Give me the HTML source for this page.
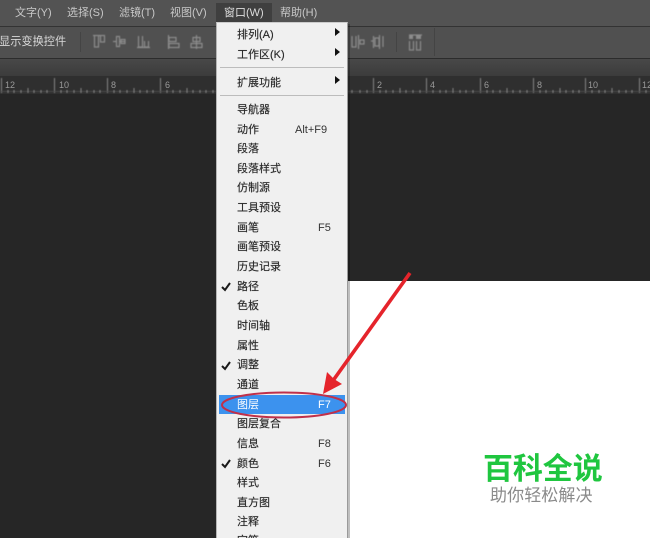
<!DOCTYPE html>
<html lang="zh">
<head>
<meta charset="utf-8">
<style>
html,body{margin:0;padding:0;background:#262626}
#p{position:relative;width:650px;height:538px;overflow:hidden;background:#262626;font-family:"Liberation Sans","Noto Sans CJK SC",sans-serif}
#p div,#p span{position:absolute;white-space:nowrap}
.t{font-size:11px;line-height:14px;color:#c8c8c8;top:6px;filter:blur(.35px)}
.m{left:237px;font-size:11px;line-height:14px;color:#2a2a2a;filter:blur(.3px);text-shadow:0 0 .5px #555}
.k{font-size:11px;line-height:14px;color:#333;filter:blur(.3px)}
.r{font-size:9px;line-height:10px;color:#9a9a9a;top:80px;filter:blur(.35px)}
.a{left:335px;width:0;height:0;border-left:5px solid #111;border-top:4px solid transparent;border-bottom:4px solid transparent}
</style>
</head>
<body>
<div id="p">
<div style="left:0;top:0;width:650px;height:26px;background:#535353"></div>
<div style="left:0;top:26px;width:650px;height:1px;background:#333"></div>
<div style="left:0;top:27px;width:650px;height:31px;background:#505050"></div>
<div style="left:0;top:58px;width:650px;height:1px;background:#2c2c2c"></div>
<div style="left:0;top:59px;width:650px;height:17px;background:linear-gradient(#484848,#3c3c3c)"></div>
<div style="left:0;top:76px;width:650px;height:18px;background:#2f2f2f"></div>
<div style="left:0;top:94px;width:650px;height:187px;background:#262626"></div>
<div style="left:348px;top:281px;width:302px;height:257px;background:#fff"></div>

<div style="left:216px;top:3px;width:56px;height:20px;background:#3f3f3f"></div>
<span class="t" style="left:15px">文字(Y)</span>
<span class="t" style="left:67px">选择(S)</span>
<span class="t" style="left:119px">滤镜(T)</span>
<span class="t" style="left:170px">视图(V)</span>
<span class="t" style="left:224px;color:#ddd">窗口(W)</span>
<span class="t" style="left:280px">帮助(H)</span>
<span class="t" style="left:-1px;top:35px;color:#d8d8d8;font-size:11.2px">显示变换控件</span>

<div style="left:80px;top:32px;width:1px;height:20px;background:#444"></div>
<div style="left:396px;top:32px;width:1px;height:20px;background:#444"></div>
<div style="left:434px;top:28px;width:1px;height:28px;background:#444"></div>
<svg style="position:absolute;left:0;top:0;filter:blur(.6px)" width="650" height="100" fill="none" stroke="#8c8c8c" stroke-width="1.2">
<path d="M93 35.500h12M94.500 36v11h4V36M100.500 36v6h4v-6M113 41.500h3M120 41.500h5M116.500 36.500h3v10h-3zM121 39.500h4v4h-4zM137 47.500h13M138.500 36v11h4V36M144.500 41v6h4v-6M168.500 35v14M169 37.500h7v4h-7zM169 43.500h10v4h-10zM196.500 35v14M193 37.500h7v4h-7zM191 43.500h11v4h-11z"/>
<path d="M358.500 35v14M352 36v11h4V36M360 40h4v4h-4zM373.500 36v12M379.500 35v14M375 38h4v8h-4zM383 36v11M371 41h2M409 35h13M409.500 41v9h4v-9M416.500 41v9h4v-9"/>
<path d="M409 35h4v4h-4zM416 35h5v4h-5z" fill="#8c8c8c" stroke="none"/>
</svg>
<span class="r" style="left:5px">12</span>
<span class="r" style="left:59px">10</span>
<span class="r" style="left:111px">8</span>
<span class="r" style="left:165px">6</span>
<span class="r" style="left:377px">2</span>
<span class="r" style="left:430px">4</span>
<span class="r" style="left:484px">6</span>
<span class="r" style="left:537px">8</span>
<span class="r" style="left:588px">10</span>
<span class="r" style="left:642px">12</span>
<svg style="position:absolute;left:0;top:76px;filter:blur(.4px)" width="650" height="18" stroke="#868686" stroke-width="1" fill="none">
<path d="M1.500 2v15M54.500 2v15M107.500 2v15M160.500 2v15M373.500 2v15M426.500 2v15M480.500 2v15M533.500 2v15M585.500 2v15M639.500 2v15"/>
<path d="M0 15.500h650" stroke="#4a4a4a"/>
<path d="M8 14v3M14 14v3M21 14v3M28 12v5M34 14v3M41 14v3M47 14v3M61 14v3M67 14v3M74 14v3M81 12v5M87 14v3M94 14v3M100 14v3M114 14v3M120 14v3M127 14v3M134 12v5M140 14v3M147 14v3M153 14v3M167 14v3M173 14v3M180 14v3M187 12v5M193 14v3M200 14v3M206 14v3M213 14v3M352 14v3M360 14v3M367 14v3M380 14v3M386 14v3M393 14v3M400 12v5M406 14v3M413 14v3M420 14v3M433 14v3M440 14v3M446 14v3M453 12v5M460 14v3M466 14v3M473 14v3M487 14v3M493 14v3M500 14v3M507 12v5M513 14v3M520 14v3M527 14v3M540 14v3M546 14v3M553 14v3M560 12v5M566 14v3M573 14v3M579 14v3M592 14v3M599 14v3M605 14v3M612 12v5M619 14v3M626 14v3M632 14v3M646 14v3"/>
</svg>

<div style="left:216px;top:22px;width:132px;height:516px;background:#f0f0f0;border-left:1px solid #b5b5b5;box-sizing:border-box;border-right:1px solid #9a9a9a;border-top:1px solid #ccc"></div>
<div style="left:348px;top:24px;width:2px;height:514px;background:rgba(0,0,0,.25)"></div>
<div style="left:220px;top:67px;width:124px;height:1px;background:#bcbcbc"></div>
<div style="left:220px;top:95px;width:124px;height:1px;background:#bcbcbc"></div>
<div style="left:219px;top:395px;width:126px;height:19px;background:#3c92ee"></div>

<span class="m" style="top:28px">排列(A)</span>
<span class="m" style="top:48px">工作区(K)</span>
<span class="m" style="top:76px">扩展功能</span>
<div class="a" style="top:28px"></div>
<div class="a" style="top:48px"></div>
<div class="a" style="top:76px"></div>
<span class="m" style="top:103px">导航器</span>
<span class="m" style="top:123px">动作</span>
<span class="m" style="top:142px">段落</span>
<span class="m" style="top:162px">段落样式</span>
<span class="m" style="top:181px">仿制源</span>
<span class="m" style="top:201px">工具预设</span>
<span class="m" style="top:221px">画笔</span>
<span class="m" style="top:240px">画笔预设</span>
<span class="m" style="top:260px">历史记录</span>
<span class="m" style="top:280px">路径</span>
<span class="m" style="top:299px">色板</span>
<span class="m" style="top:319px">时间轴</span>
<span class="m" style="top:339px">属性</span>
<span class="m" style="top:358px">调整</span>
<span class="m" style="top:378px">通道</span>
<span class="m" style="top:398px;color:#fff;text-shadow:none">图层</span>
<span class="m" style="top:417px">图层复合</span>
<span class="m" style="top:437px">信息</span>
<span class="m" style="top:457px">颜色</span>
<span class="m" style="top:476px">样式</span>
<span class="m" style="top:496px">直方图</span>
<span class="m" style="top:515px">注释</span>
<span class="m" style="top:534px">字符</span>
<span class="k" style="left:295px;top:123px">Alt+F9</span>
<span class="k" style="left:318px;top:221px">F5</span>
<span class="k" style="left:318px;top:398px;color:#fff">F7</span>
<span class="k" style="left:318px;top:437px">F8</span>
<span class="k" style="left:318px;top:457px">F6</span>
<svg style="position:absolute;left:0;top:0" width="650" height="538" fill="none">
<path d="M222 287l3 3 5-7M222 366l3 3 5-7M222 464l3 3 5-7" stroke="#1a1a1a" stroke-width="2"/>
<ellipse cx="284" cy="405" rx="62" ry="12.500" stroke="#c0304a" stroke-width="2"/>
<path d="M410 273L332 382" stroke="#e5242b" stroke-width="3.600"/>
<path d="M323 394l4-22 7 7 8 5z" fill="#e5242b"/>
</svg>

<span style="left:483px;top:448px;font-size:30px;line-height:36px;font-weight:bold;color:#1fc63f;font-family:'Noto Sans CJK SC',sans-serif;letter-spacing:-.1px">百科全说</span>
<span style="left:490px;top:484px;font-size:17px;line-height:20px;color:#8a8a8a;letter-spacing:.1px;font-family:'Noto Sans CJK SC',sans-serif">助你轻松解决</span>
</div>
</body>
</html>
